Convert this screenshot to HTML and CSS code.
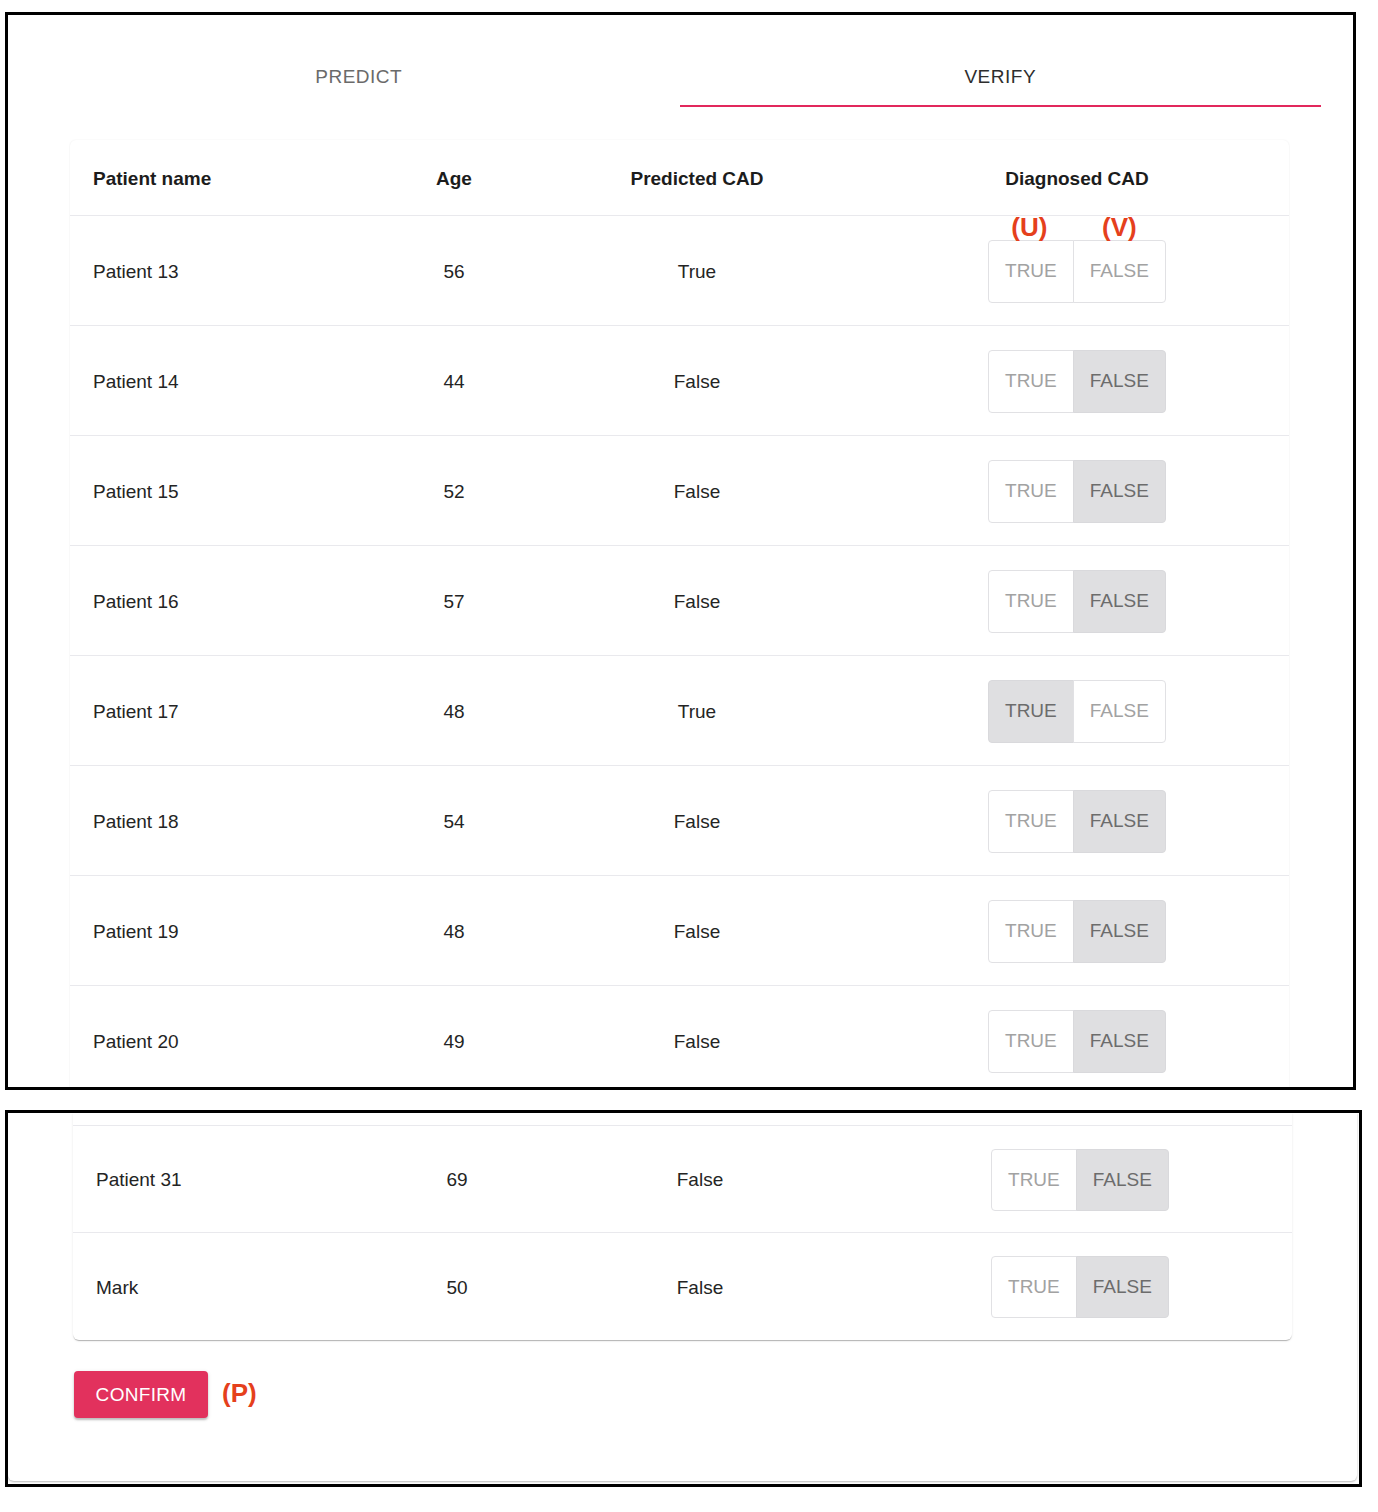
FILE: index.html
```html
<!DOCTYPE html>
<html lang="en">
<head>
<meta charset="utf-8">
<title>Verify</title>
<link rel="stylesheet" href="styles.css">
</head>
<body>
<section class="panel panel-top">
  <nav class="tabs">
    <div class="tab">PREDICT</div>
    <div class="tab tab-active">VERIFY</div>
  </nav>
  <div class="card card-top">
    <div class="row head">
      <div class="c1">Patient name</div>
      <div class="c2">Age</div>
      <div class="c3">Predicted CAD</div>
      <div class="c4">Diagnosed CAD</div>
    </div>
    <div class="row">
      <div class="c1">Patient 13</div><div class="c2">56</div><div class="c3">True</div>
      <div class="c4"><div class="toggle"><span class="tbtn"><i class="note">(U)</i>TRUE</span><span class="tbtn"><i class="note">(V)</i>FALSE</span></div></div>
    </div>
    <div class="row">
      <div class="c1">Patient 14</div><div class="c2">44</div><div class="c3">False</div>
      <div class="c4"><div class="toggle"><span class="tbtn">TRUE</span><span class="tbtn on">FALSE</span></div></div>
    </div>
    <div class="row">
      <div class="c1">Patient 15</div><div class="c2">52</div><div class="c3">False</div>
      <div class="c4"><div class="toggle"><span class="tbtn">TRUE</span><span class="tbtn on">FALSE</span></div></div>
    </div>
    <div class="row">
      <div class="c1">Patient 16</div><div class="c2">57</div><div class="c3">False</div>
      <div class="c4"><div class="toggle"><span class="tbtn">TRUE</span><span class="tbtn on">FALSE</span></div></div>
    </div>
    <div class="row">
      <div class="c1">Patient 17</div><div class="c2">48</div><div class="c3">True</div>
      <div class="c4"><div class="toggle"><span class="tbtn on">TRUE</span><span class="tbtn">FALSE</span></div></div>
    </div>
    <div class="row">
      <div class="c1">Patient 18</div><div class="c2">54</div><div class="c3">False</div>
      <div class="c4"><div class="toggle"><span class="tbtn">TRUE</span><span class="tbtn on">FALSE</span></div></div>
    </div>
    <div class="row">
      <div class="c1">Patient 19</div><div class="c2">48</div><div class="c3">False</div>
      <div class="c4"><div class="toggle"><span class="tbtn">TRUE</span><span class="tbtn on">FALSE</span></div></div>
    </div>
    <div class="row">
      <div class="c1">Patient 20</div><div class="c2">49</div><div class="c3">False</div>
      <div class="c4"><div class="toggle"><span class="tbtn">TRUE</span><span class="tbtn on">FALSE</span></div></div>
    </div>
  </div>
</section>

<section class="panel panel-bottom">
  <div class="paper">
    <div class="card card-bottom">
      <div class="stub"></div>
      <div class="row row-b">
        <div class="c1">Patient 31</div><div class="c2">69</div><div class="c3">False</div>
        <div class="c4"><div class="toggle tb"><span class="tbtn">TRUE</span><span class="tbtn on">FALSE</span></div></div>
      </div>
      <div class="row row-b last">
        <div class="c1">Mark</div><div class="c2">50</div><div class="c3">False</div>
        <div class="c4"><div class="toggle tb"><span class="tbtn">TRUE</span><span class="tbtn on">FALSE</span></div></div>
      </div>
    </div>
    <div class="actions">
      <button class="confirm" type="button">CONFIRM</button>
      <span class="note-p">(P)</span>
    </div>
  </div>
</section>
</body>
</html>
```

FILE: styles.css
```css
* { box-sizing: border-box; }

html, body {
  margin: 0;
  padding: 0;
  background: #ffffff;
}

body {
  font-family: "Liberation Sans", Arial, Helvetica, sans-serif;
  color: #222;
  width: 1378px;
  height: 1512px;
  overflow: hidden;
}

.panel {
  border: 3px solid #000;
  background: #fff;
  overflow: hidden;
}

.panel-top {
  margin: 12px 0 0 5px;
  width: 1351px;
  height: 1078px;
}

.panel-bottom {
  margin: 20px 0 0 5px;
  width: 1357px;
  height: 377px;
}

/* Tabs */
.tabs {
  display: flex;
  width: 1283px;
  margin: 30px 0 0 30px;
}

.tab {
  flex: 1;
  height: 62px;
  display: flex;
  align-items: center;
  justify-content: center;
  padding-top: 3px;
  font-size: 19px;
  letter-spacing: 0.5px;
  color: #6a6a6a;
  border-bottom: 2px solid transparent;
}

.tab-active {
  color: #2e2e2e;
  border-bottom-color: #e2285c;
}

/* Card / table */
.card {
  width: 1219px;
  background: #fff;
  border-radius: 6px;
}

.card-top {
  margin: 33px 0 0 62px;
  box-shadow: 0 0 2px rgba(0, 0, 0, 0.07), 0 1px 2px rgba(0, 0, 0, 0.04);
}

.card-bottom {
  margin-left: 65px;
  border-radius: 0 0 6px 6px;
  box-shadow: 0 2px 1px -1px rgba(0, 0, 0, 0.18), 0 1px 1px 0 rgba(0, 0, 0, 0.10), 0 1px 3px 0 rgba(0, 0, 0, 0.07);
}

.row {
  display: grid;
  grid-template-columns: 309px 150px 336px 424px;
  align-items: center;
  height: 110px;
  border-bottom: 1px solid #e9e9ed;
  font-size: 19px;
  color: #242424;
}

.row.head {
  height: 76px;
  font-weight: bold;
  color: #1c1c1c;
}

.row-b { height: 107px; }
.row-b.last { border-bottom: none; }

.stub {
  height: 13px;
  border-bottom: 1px solid #e9e9ed;
}

.c1 { padding-left: 23px; }
.c1, .c2, .c3 { padding-top: 2px; }
.head .c4 { padding-top: 2px; }
.c2, .c3, .c4 { text-align: center; }
.c4 { display: flex; justify-content: center; }

/* Toggle */
.toggle {
  display: inline-flex;
  height: 63px;
  padding-left: 1px;
  margin-top: 1px;
}

.toggle.tb { height: 62px; }

.tbtn {
  position: relative;
  display: flex;
  align-items: center;
  justify-content: center;
  padding: 0 16px;
  margin-left: -1px;
  border: 1px solid #e1e1e4;
  color: #a2a2a2;
  font-size: 19px;
  background: #fff;
}

.tbtn:first-child {
  border-radius: 4px 0 0 4px;
}

.tbtn:last-child {
  border-radius: 0 4px 4px 0;
}

.tbtn.on {
  background: #dfdfe1;
  color: #6c6c6c;
  border-color: #d9d9dc;
}

.note {
  position: absolute;
  left: 0;
  right: 0;
  bottom: 100%;
  margin-bottom: -1px;
  padding-right: 3px;
  text-align: center;
  font-style: normal;
  font-weight: bold;
  font-size: 26px;
  line-height: 30px;
  color: #e5401c;
}

.tbtn:last-child .note { padding-right: 0; }

/* Bottom panel paper */
.paper {
  width: 1349px;
  height: 368px;
  background: #fff;
  border-radius: 0 0 6px 6px;
  box-shadow: 0 1px 2px rgba(0, 0, 0, 0.28);
}

.actions {
  display: flex;
  align-items: center;
  gap: 14px;
  margin: 31px 0 0 66px;
}

.confirm {
  width: 134px;
  height: 47px;
  border: none;
  border-radius: 4px;
  background: #e2315d;
  color: #fff;
  font-family: "Liberation Sans", Arial, Helvetica, sans-serif;
  font-size: 19px;
  letter-spacing: 0.3px;
  box-shadow: 0 2px 2px rgba(0, 0, 0, 0.2), 0 1px 4px rgba(0, 0, 0, 0.12);
  padding: 0;
}

.note-p {
  font-weight: bold;
  font-size: 26px;
  color: #e5401c;
  margin-top: -2px;
}
```
